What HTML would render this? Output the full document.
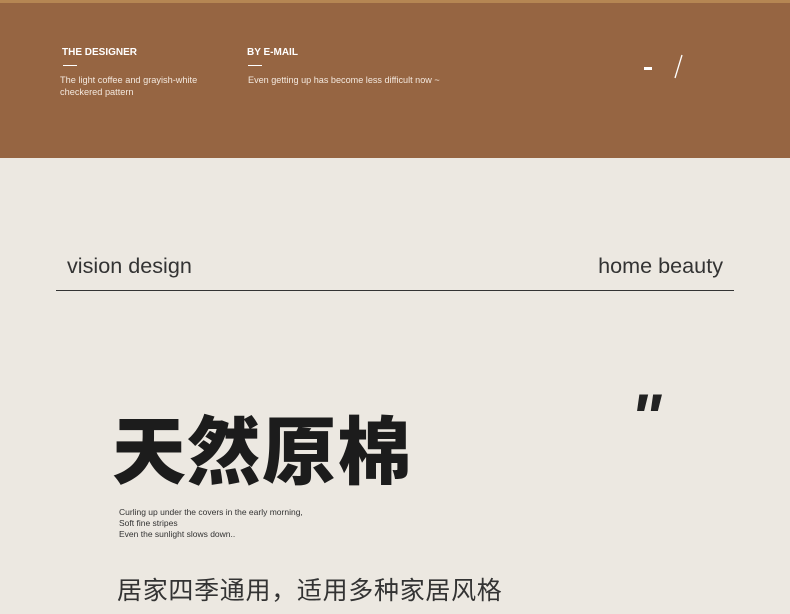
<!DOCTYPE html>
<html><head><meta charset="utf-8"><style>
body{margin:0;width:790px;height:614px;overflow:hidden;background:#ece8e1;font-family:"Liberation Sans","Noto Sans CJK SC",sans-serif;position:relative}
.a{position:absolute;white-space:nowrap}
</style></head><body>
<div class="a" style="left:0;top:0;width:790px;height:4px;background:#b58653"></div>
<div class="a" style="left:0;top:3px;width:790px;height:155px;background:#966542"></div>
<div class="a" style="left:62px;top:47px;color:#fff;font-weight:bold;font-size:10px">THE DESIGNER</div>
<div class="a" style="left:63px;top:65px;width:14px;height:1px;background:#fff"></div>
<div class="a" style="left:60px;top:74px;color:#f3e8de;font-size:9.2px;line-height:12px">The light coffee and grayish-white<br>checkered pattern</div>
<div class="a" style="left:247px;top:47px;color:#fff;font-weight:bold;font-size:10px">BY E-MAIL</div>
<div class="a" style="left:248px;top:65px;width:14px;height:1px;background:#fff"></div>
<div class="a" style="left:248px;top:74px;color:#f3e8de;font-size:9.1px;line-height:12px">Even getting up has become less difficult now ~</div>
<div class="a" style="left:644px;top:67px;width:8px;height:3px;background:#fff"></div>
<svg class="a" style="left:670px;top:54px" width="16" height="26"><line x1="12" y1="1" x2="5" y2="24" stroke="#fff" stroke-width="1.3"/></svg>
<div class="a" style="left:67px;top:253px;font-size:21.6px;color:#333">vision design</div>
<div class="a" style="right:67px;top:253px;font-size:21.6px;color:#333">home beauty</div>
<div class="a" style="left:56px;top:290px;width:678px;height:1px;background:#333"></div>
<div class="a" style="left:630px;top:382px;font-size:66px;font-weight:bold;font-style:italic;color:#222;line-height:70px">"</div>
<div class="a" style="left:112px;top:410px;font-size:74px;font-weight:900;color:#1c1c1c;line-height:86px;letter-spacing:1px">天然原棉</div>
<div class="a" style="left:119px;top:507px;font-size:8.5px;color:#333;line-height:11px">Curling up under the covers in the early morning,<br>Soft fine stripes<br>Even the sunlight slows down..</div>
<div class="a" style="left:117px;top:571px;font-size:25px;color:#333;letter-spacing:0.7px">居家四季通用，适用多种家居风格</div>
</body></html>
